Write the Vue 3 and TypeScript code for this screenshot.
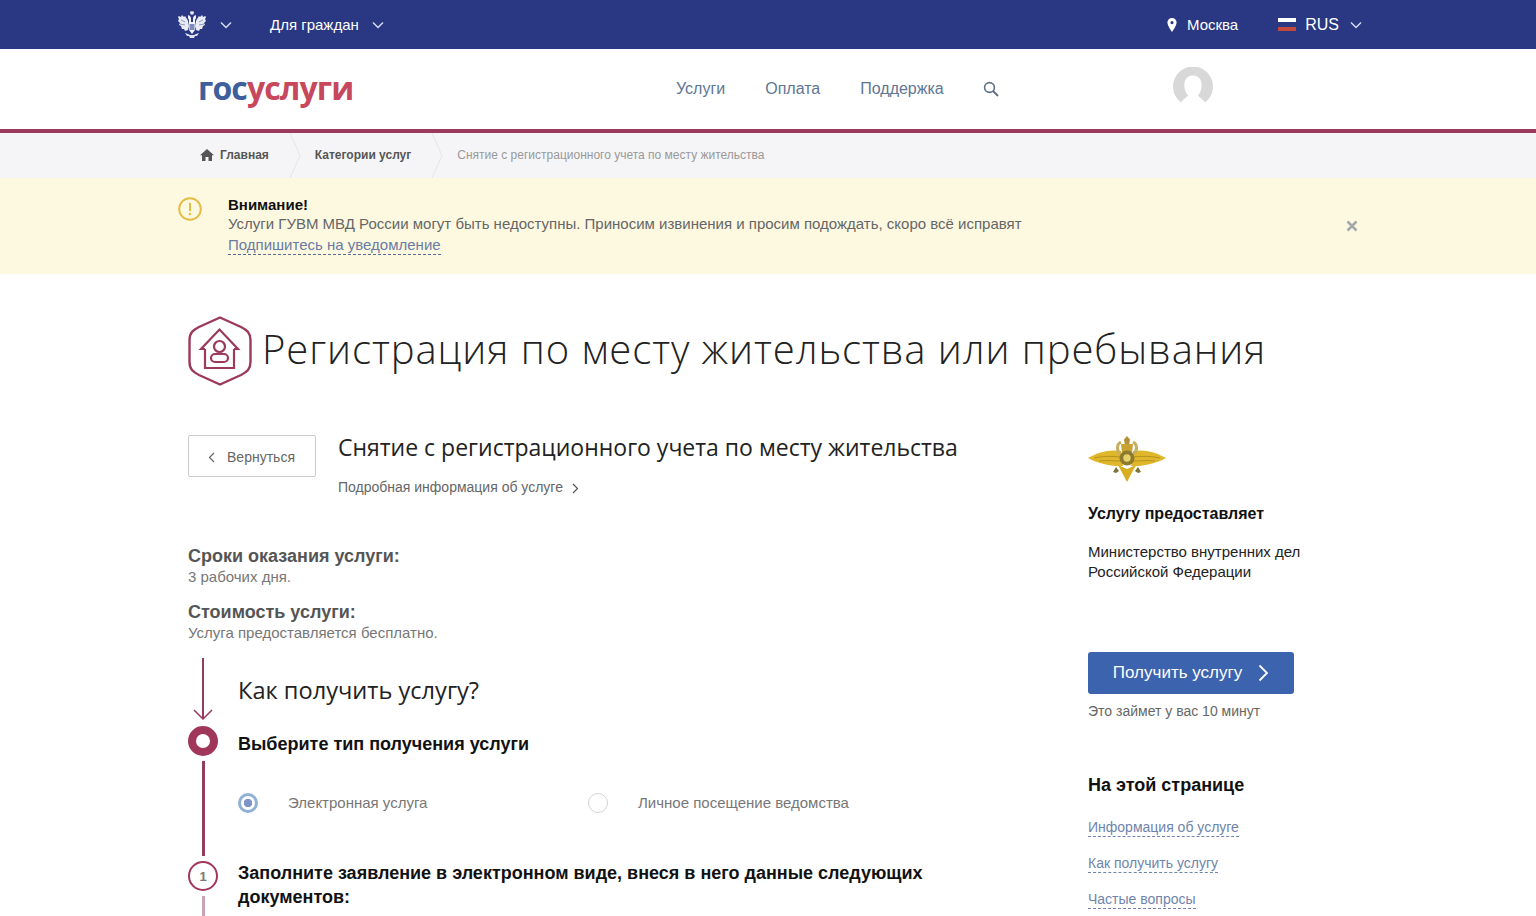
<script setup lang="ts">
const pageLinks = ['Информация об услуге', 'Как получить услугу', 'Частые вопросы']
const navLinks = ['Услуги', 'Оплата', 'Поддержка']
</script>

<template>
  <div class="page">
    <div class="topbar">
      <div class="topbar-left">
        <svg class="emblem" viewBox="0 0 28 28" width="28" height="28">
          <path d="M1 5l2 1 1-2 2 2 1-1 2 3 1 2 1 5-1 4-3 1-1-2-2 0-1-3-2-1 1-2-2-2 1-2-1-2 1-1z" fill="#e8ebf5" />
          <path d="M27 5l-2 1-1-2-2 2-1-1-2 3-1 2-1 5 1 4 3 1 1-2 2 0 1-3 2-1-1-2 2-2-1-2 1-2-1-1z" fill="#e8ebf5" />
          <path d="M10 4l2 1 1 2v4h2V7l1-2 2-1 0 3-1 2v10l-3 4-3-4V9l-1-2z" fill="#f2f4fa" />
          <path d="M12 0.500h4l-.6 3h-2.800z" fill="#f2f4fa" />
          <rect x="11.500" y="13" width="5" height="6" fill="#7f8abd" />
          <path d="M7 22l2 3 2 0 1 2h4l1-2 2 0 2-3-3 1-2 1h-4l-2-1z" fill="#dfe3f1" />
          <path d="M3 9l4 2M2 13l5 1M25 9l-4 2M26 13l-5 1" stroke="#7f8abd" stroke-width=".9" />
        </svg>
        <svg class="chev chev-first" viewBox="0 0 12 8" width="12" height="8"><path d="M1 1.500l5 5 5-5" /></svg>
        <span class="citizens">Для граждан</span>
        <svg class="chev" viewBox="0 0 12 8" width="12" height="8"><path d="M1 1.500l5 5 5-5" /></svg>
      </div>
      <div class="topbar-right">
        <svg viewBox="0 0 10 14" width="10" height="14"><path fill-rule="evenodd" d="M5 0a4.600 4.600 0 0 1 4.600 4.600C9.600 7.800 5 14 5 14S.4 7.800.4 4.600A4.600 4.600 0 0 1 5 0zm0 3a1.600 1.600 0 1 0 0 3.200A1.600 1.600 0 0 0 5 3z" fill="#fff" /></svg>
        <span class="city">Москва</span>
        <span class="flag"><i class="fw"></i><i class="fb"></i><i class="fr"></i></span>
        <span class="lang">RUS</span>
        <svg class="chev" viewBox="0 0 12 8" width="12" height="8"><path d="M1 1.500l5 5 5-5" /></svg>
      </div>
    </div>

    <header class="header">
      <div class="logo"><span class="logo-blue">гос</span><span class="logo-red">услуги</span></div>
      <nav class="nav">
        <a v-for="item in navLinks" :key="item">{{ item }}</a>
        <svg class="search" viewBox="0 0 16 16" width="16" height="16"><circle cx="6.500" cy="6.500" r="4.900" fill="none" stroke="#5f7187" stroke-width="1.600" /><path d="M10 10l5 5" stroke="#5f7187" stroke-width="2" /></svg>
      </nav>
      <svg class="avatar" viewBox="0 0 40 40" width="40" height="40">
        <path d="M8 35.500A20 20 0 1 1 32 35.500L31 34C28 31 26 30 25 28.500C28 25 29 21 28.500 16C28 11 24 8.500 20 8.500C16 8.500 12 11 11.500 16C11 21 12 25 15 28.500C14 30 12 31 9 34z" fill="#d8d8d8" />
      </svg>
    </header>

    <div class="crumbs">
      <svg viewBox="0 0 14 12" width="14" height="12"><path d="M7 0L0 6.200h2V12h3.500V8h3v4H12V6.200h2z" fill="#555" /></svg>
      <span class="crumb crumb-home">Главная</span>
      <svg class="sep" viewBox="0 0 12 45" width="12" height="45"><path d="M1 0l10 22.500L1 45" /></svg>
      <span class="crumb">Категории услуг</span>
      <svg class="sep" viewBox="0 0 12 45" width="12" height="45"><path d="M1 0l10 22.500L1 45" /></svg>
      <span class="crumb-current">Снятие с регистрационного учета по месту жительства</span>
    </div>

    <div class="notice">
      <svg class="notice-icon" viewBox="0 0 24 24" width="24" height="24">
        <circle cx="12" cy="12" r="10.800" fill="none" stroke="#e5bd45" stroke-width="2" />
        <path d="M12 6v8" stroke="#e5bd45" stroke-width="2" /><circle cx="12" cy="17" r="1.300" fill="#e5bd45" />
      </svg>
      <div class="notice-body">
        <div class="notice-title">Внимание!</div>
        <div class="notice-text">Услуги ГУВМ МВД России могут быть недоступны. Приносим извинения и просим подождать, скоро всё исправят</div>
        <a class="notice-link">Подпишитесь на уведомление</a>
      </div>
      <svg class="notice-close" viewBox="0 0 12 12" width="12" height="12"><path d="M1.500 1.500l9 9M10.500 1.500l-9 9" stroke="#a3a8ad" stroke-width="2.600" /></svg>
    </div>

    <main class="main">
      <div class="title-row">
        <svg viewBox="0 0 64 70" width="64" height="70">
          <path d="M32 1.500L53 11C59 14 62.500 17 62.500 24V46C62.500 53 59 56 53 59L32 68.500L11 59C5 56 1.500 53 1.500 46V24C1.500 17 5 14 11 11z" fill="none" stroke="#9b3a5c" stroke-width="2.400" />
          <path d="M17 33H13L31.500 13.500L50 33H46M17 33V52H46V33" fill="none" stroke="#9b3a5c" stroke-width="2.200" />
          <circle cx="31.500" cy="30.500" r="5.500" fill="none" stroke="#9b3a5c" stroke-width="2.200" />
          <rect x="23" y="38" width="17" height="8" rx="4" fill="none" stroke="#9b3a5c" stroke-width="2.200" />
        </svg>
        <h1>Регистрация по месту жительства или пребывания</h1>
      </div>

      <div class="columns">
        <div class="col-left">
          <div class="service-head">
            <button class="back">
              <svg viewBox="0 0 7 11" width="7" height="11"><path d="M6 1L1.500 5.500 6 10" fill="none" stroke="#666" stroke-width="1.200" /></svg>
              Вернуться
            </button>
            <div>
              <h2>Снятие с регистрационного учета по месту жительства</h2>
              <div class="more">Подробная информация об услуге
                <svg viewBox="0 0 7 11" width="7" height="11"><path d="M1 1l4.500 4.500L1 10" fill="none" stroke="#555" stroke-width="1.200" /></svg>
              </div>
            </div>
          </div>

          <div class="fact fact-first">
            <h4>Сроки оказания услуги:</h4>
            <p>3 рабочих дня.</p>
          </div>
          <div class="fact">
            <h4>Стоимость услуги:</h4>
            <p>Услуга предоставляется бесплатно.</p>
          </div>

          <div class="steps">
            <div class="marker marker-arrow">
              <span class="line"></span>
              <svg viewBox="0 0 20 11" width="20" height="11"><path d="M1 1l9 9 9-9" fill="none" stroke="#9b3a5c" stroke-width="1.500" /></svg>
            </div>
            <h3>Как получить услугу?</h3>

            <span class="dot"></span>
            <div class="step-title">Выберите тип получения услуги</div>

            <div class="marker"><span class="line line-thick"></span></div>
            <div class="options">
              <label class="option option-on"><span class="radio radio-on"></span>Электронная услуга</label>
              <label class="option"><span class="radio"></span>Личное посещение ведомства</label>
            </div>

            <div class="marker">
              <span class="num">1</span>
              <span class="line-tail"></span>
            </div>
            <div class="step-title step-long">Заполните заявление в электронном виде, внеся в него данные следующих документов:</div>
          </div>
        </div>

        <aside class="col-right">
          <svg class="mvd" viewBox="0 0 78 46" width="78" height="46">
            <path d="M0 22C10 16 22 13 33 15L35 30C24 31 9 27 0 22z" fill="#e0b62a" />
            <path d="M78 22C68 16 56 13 45 15L43 30C54 31 69 27 78 22z" fill="#e0b62a" />
            <path d="M6 22C14 20 24 20 33 21M11 25C18 24 26 25 33 25M72 22C64 20 54 20 45 21M67 25C60 24 52 25 45 25" fill="none" stroke="#a98a1e" stroke-width=".8" />
            <path d="M30 29L39 46L48 29L39 33z" fill="#d7ad22" />
            <path d="M33 6C29 8 28 13 32 18M45 6C49 8 50 13 46 18" fill="none" stroke="#c9ad62" stroke-width="3" />
            <path d="M39 0l3 3.500-.8 4.500h-4.400L36 3.500z" fill="#b4903a" />
            <path d="M33 8h12l-2 18H35z" fill="#c8a233" />
            <circle cx="39" cy="22" r="7.500" fill="#8c7a2d" /><circle cx="39" cy="22" r="3.700" fill="#e9d16a" />
            <path d="M28 31l-3 5 3 1 3-2zM50 31l3 5-3 1-3-2z" fill="#7f7338" />
          </svg>
          <div class="side-title">Услугу предоставляет</div>
          <div class="side-org">Министерство внутренних дел<br />Российской Федерации</div>
          <button class="get">Получить услугу
            <svg viewBox="0 0 11 18" width="11" height="18"><path d="M1.500 1.500L9 9l-7.500 7.500" fill="none" stroke="#fff" stroke-width="1.800" /></svg>
          </button>
          <div class="side-time">Это займет у вас 10 минут</div>
          <div class="side-title side-page">На этой странице</div>
          <a v-for="link in pageLinks" :key="link" class="side-link">{{ link }}</a>
        </aside>
      </div>
    </main>
  </div>
</template>

<style scoped>
.page {
  height: 916px;
  overflow: hidden;
  background: #fff;
  font-family: "Liberation Sans", Arial, sans-serif;
  color: #111;
}

.topbar {
  height: 49px;
  background: #2a3782;
  color: #fff;
  display: flex;
  justify-content: space-between;
  align-items: center;
  padding: 0 174px 0 178px;
  font-size: 15px;
}

.topbar-left,
.topbar-right {
  display: flex;
  align-items: center;
}

.chev {
  fill: none;
  stroke: #d5daec;
  stroke-width: 1.500;
}

.chev-first {
  margin: 0 38px 0 14px;
}

.citizens {
  margin: 0 13px 0 0;
}

.city {
  margin: 0 40px 0 10px;
}

.flag {
  display: flex;
  flex-direction: column;
  width: 18px;
  height: 13px;
  margin-right: 9px;
}

.flag i {
  flex: 1;
}

.fw { background: #fff; }
.fb { background: #2a3782; }
.fr { background: #c4473c; }

.lang {
  font-size: 16px;
  margin-right: 11px;
}

.header {
  height: 80px;
  display: flex;
  align-items: center;
  padding-left: 198px;
}

.logo {
  font-family: "Open Sans", sans-serif;
  font-weight: 700;
  font-size: 32px;
  width: 478px;
  letter-spacing: -0.9px;
  line-height: 1;
  margin-top: -3px;
}

.logo-blue { color: #3e5f9c; }
.logo-red { color: #c7475c; }

.nav {
  display: flex;
  align-items: center;
  gap: 40px;
  font-size: 16px;
  color: #5e7693;
  width: 497px;
  margin-top: -1px;
}

.search {
  margin-left: -1px;
}

.avatar {
  margin-top: -5px;
}

.crumbs {
  border-top: 4px solid #9b3a5c;
  height: 44px;
  padding: 0 0 1px 200px;
  background: #f5f5f7;
  display: flex;
  align-items: center;
  font-size: 12px;
  font-weight: 700;
  color: #555;
}

.crumb-home {
  margin-left: 6px;
}

.sep {
  fill: none;
  stroke: #e5e5e8;
  margin: 0 14px 0 20px;
}

.crumb-current {
  font-weight: 400;
  color: #999;
}

.notice {
  height: 96px;
  background: #fdf9e1;
  display: flex;
  padding: 17px 178px 0 178px;
  box-sizing: border-box;
}

.notice-icon {
  margin: 2px 26px 0 0;
}

.notice-body {
  flex: 1;
  font-size: 15px;
  line-height: 20px;
  color: #666;
}

.notice-title {
  font-weight: 700;
  color: #111;
  line-height: 19px;
}

.notice-link {
  color: #6a7ba4;
  border-bottom: 1px dashed #5a6a90;
  display: inline-block;
  line-height: 18px;
  margin-top: 2px;
}

.notice-close {
  margin-top: 25px;
}

.main {
  padding-left: 188px;
}

.title-row {
  display: flex;
  align-items: center;
  gap: 10px;
  margin-top: 42px;
}

h1 {
  margin: 0 0 4px;
  font-family: "Open Sans", sans-serif;
  font-weight: 300;
  font-size: 40px;
  letter-spacing: 0.93px;
  line-height: 66px;
  color: #222;
}

.columns {
  display: flex;
  margin-top: 49px;
}

.col-left {
  width: 900px;
}

.service-head {
  display: flex;
  align-items: flex-start;
  gap: 22px;
}

.back {
  width: 128px;
  height: 42px;
  border: 1px solid #ccc;
  border-radius: 2px;
  background: #fff;
  font: 14px "Liberation Sans", Arial, sans-serif;
  color: #666;
  display: flex;
  align-items: center;
  justify-content: center;
  gap: 12px;
  padding: 2px 1px 0 0;
}

h2 {
  margin: -2px 0 0;
  font-family: "Open Sans", sans-serif;
  font-weight: 400;
  font-size: 23px;
  line-height: 28px;
  color: #222;
}

.more {
  margin-top: 17px;
  font-size: 14px;
  line-height: 18px;
  color: #666;
}

.more svg {
  margin-left: 5px;
  vertical-align: -2px;
}

.fact {
  margin-top: 15px;
}

.fact-first {
  margin-top: 49px;
}

.fact h4 {
  margin: 0;
  font-size: 18px;
  line-height: 22px;
  font-weight: 700;
  color: #555;
}

.fact p {
  margin: 0;
  font-size: 15px;
  line-height: 19px;
  color: #777;
}

.steps {
  display: grid;
  grid-template-columns: 30px 1fr;
  column-gap: 20px;
  justify-items: start;
  margin-top: 16px;
}

.marker {
  justify-self: center;
  display: flex;
  flex-direction: column;
  align-items: center;
  align-self: stretch;
}

.marker-arrow {
  padding-bottom: 6px;
}

.marker-arrow svg {
  margin-top: -10px;
}

.line {
  flex: 1;
  width: 2px;
  background: #8f3e60;
}

.line-thick {
  width: 3px;
  margin: 5px 0;
}

h3 {
  margin: 0;
  height: 68px;
  padding-top: 14px;
  box-sizing: border-box;
  font-family: "Open Sans", sans-serif;
  font-weight: 400;
  font-size: 23.6px;
  line-height: 36px;
  color: #222;
}

.dot {
  width: 30px;
  height: 30px;
  box-sizing: border-box;
  border: 8px solid #a0375a;
  border-radius: 50%;
}

.step-title {
  font-size: 18px;
  line-height: 24px;
  font-weight: 700;
  align-self: center;
  padding-top: 6px;
}

.step-long {
  align-self: start;
  padding: 0 0 24px;
  width: 720px;
}

.options {
  display: flex;
  height: 105px;
  align-items: center;
  font-size: 15px;
  color: #777;
  padding-bottom: 12px;
  box-sizing: border-box;
}

.option {
  display: flex;
  align-items: center;
  gap: 30px;
  width: 350px;
}

.radio {
  width: 20px;
  height: 20px;
  box-sizing: border-box;
  border: 1px solid #d5d5d5;
  border-radius: 50%;
}

.radio-on {
  border: 3px solid #8fb1d3;
  background: radial-gradient(circle, #7d93c9 0 4px, #fff 4.500px);
}

.num {
  width: 30px;
  height: 30px;
  flex: none;
  box-sizing: border-box;
  border: 2.500px solid #a0375a;
  border-radius: 50%;
  font-size: 13px;
  font-weight: 700;
  color: #777;
  display: flex;
  align-items: center;
  justify-content: center;
}

.line-tail {
  flex: 1;
  width: 3px;
  margin-top: 5px;
  background: #c9a4b4;
}

.col-right {
  width: 260px;
  display: flex;
  flex-direction: column;
  align-items: flex-start;
}

.mvd {
  margin-top: 1px;
}

.side-title {
  margin-top: 22px;
  font-size: 16px;
  line-height: 20px;
  font-weight: 700;
  color: #111;
}

.side-org {
  margin-top: 18px;
  font-size: 15px;
  line-height: 20px;
  color: #222;
}

.get {
  margin-top: 70px;
  width: 206px;
  height: 42px;
  border: 0;
  border-radius: 3px;
  background: #3c63ae;
  color: #fff;
  font: 17px "Liberation Sans", Arial, sans-serif;
  display: flex;
  align-items: center;
  justify-content: center;
  gap: 16px;
}

.side-time {
  margin-top: 8px;
  font-size: 14px;
  line-height: 18px;
  color: #666;
}

.side-page {
  margin-top: 55px;
  font-size: 18px;
}

.side-link {
  margin-top: 17px;
  font-size: 14px;
  line-height: 18px;
  color: #6f84ac;
  border-bottom: 1px dashed #6f84ac;
}

.side-page + .side-link {
  margin-top: 23px;
}
</style>
